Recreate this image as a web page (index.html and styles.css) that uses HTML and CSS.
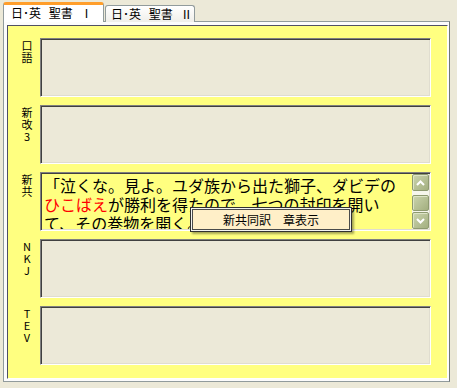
FILE: index.html
```html
<!DOCTYPE html>
<html lang="ja">
<head>
<meta charset="utf-8">
<title>日･英 聖書</title>
<link rel="stylesheet" href="styles.css">
</head>
<body>
<div class="tabs">
  <div class="tab active">日･英 聖書 Ⅰ</div>
  <div class="tab">日･英 聖書 Ⅱ</div>
</div>
<div class="page">
  <div class="panel">
    <div class="label"><span>口</span><span>語</span></div>
    <div class="box"></div>

    <div class="label"><span>新</span><span>改</span><span>3</span></div>
    <div class="box"></div>

    <div class="label"><span>新</span><span>共</span></div>
    <div class="box verse">
      <div class="text">「泣くな。見よ。ユダ族から出た獅子、ダビデの<br><span class="red">ひこばえ</span>が勝利を得たので、七つの封印を開い<br>て、その巻物を開く。」</div>
      <div class="sb">
        <div class="sbtn"><svg width="9" height="6" viewBox="0 0 9 6"><path d="M1 5 L4.5 1.5 L8 5" fill="none" stroke="#fff" stroke-width="2"/></svg></div>
        <div class="track"><div class="thumb"></div></div>
        <div class="sbtn"><svg width="9" height="6" viewBox="0 0 9 6"><path d="M1 1 L4.5 4.5 L8 1" fill="none" stroke="#fff" stroke-width="2"/></svg></div>
      </div>
      <div class="popup">新共同訳　章表示</div>
    </div>

    <div class="label"><span>N</span><span>K</span><span>J</span></div>
    <div class="box"></div>

    <div class="label"><span>T</span><span>E</span><span>V</span></div>
    <div class="box"></div>
  </div>
</div>
</body>
</html>
```
FILE: styles.css
```css
* { box-sizing: border-box; }
body {
  margin: 0;
  width: 457px;
  height: 388px;
  overflow: hidden;
  background: #ECE9D8;
  font-family: "Noto Sans CJK JP", sans-serif;
  font-size: 12px;
  color: #000;
}
.tabs {
  display: flex;
  align-items: flex-end;
  height: 22px;
  padding-left: 3px;
}
.tab {
  height: 17px;
  width: 90px;
  margin-left: 1px;
  border: 1px solid #919B9C;
  border-bottom: none;
  border-radius: 3px 3px 0 0;
  background: linear-gradient(#FFFFFF, #F0EFEA);
  padding-left: 5px;
  line-height: 16px;
  word-spacing: 5px;
  white-space: nowrap;
}
.tab.active {
  position: relative;
  z-index: 1;
  width: 101px;
  height: 20px;
  margin-left: 0;
  background: #FFFFFF;
  border-top: 3px solid #FF9E2B;
  padding-left: 7px;
  line-height: 15px;
}
.page {
  margin: -1px 0 0 3px;
  width: 447px;
  height: 361px;
  border: 1px solid #919B9C;
  border-right-color: #6E7676;
  padding: 3px 1px 2px 3px;
  background: #FCFCFC;
}
.panel {
  width: 441px;
  height: 354px;
  border: 1px solid;
  border-color: #505064 #FFFFFF #FFFFFF #505064;
  background: #FFFF80;
  padding: 12px 16px 13px 0;
  display: grid;
  grid-template-columns: 32px 391px;
  grid-auto-rows: 59px;
  row-gap: 8px;
}
.label {
  padding: 1px 0 0 6px;
  display: flex;
  flex-direction: column;
  align-items: center;
  font-size: 11px;
}
.label span {
  display: block;
  height: 12px;
  line-height: 12px;
}
.box {
  border: 1px solid;
  border-color: #808080 #FFFFFF #FFFFFF #808080;
  box-shadow: inset 1px 1px #404040, inset -1px -1px #E0DDD0;
  background: #ECE9D8;
}
.verse {
  position: relative;
  display: flex;
  background: #FFFF80;
  padding: 1px;
}
.text {
  flex: 1;
  padding: 2px 0 0 2px;
  font-size: 16px;
  line-height: 19px;
  white-space: nowrap;
  overflow: hidden;
}
.red { color: #FF0000; }
.sb {
  width: 17px;
  display: flex;
  flex-direction: column;
  background: #F6F6EC;
}
.sbtn, .thumb {
  height: 17px;
  border: 1px solid #8E9A70;
  border-radius: 2px;
  background: linear-gradient(135deg, #CBD4AE, #A3AF7F);
  box-shadow: inset 1px 1px #DDE4C6;
  display: flex;
  align-items: center;
  justify-content: center;
}
.track {
  flex: 1;
  display: flex;
  flex-direction: column;
  justify-content: flex-end;
  padding: 0 0 1px;
}
.thumb { height: 16px; }
.popup {
  position: absolute;
  left: 149px;
  top: 34px;
  width: 162px;
  height: 25px;
  border: 1px solid #303030;
  box-shadow: inset 0 0 0 1px #F4F4F0, inset 0 0 0 2px #4A4A4A, 2px 2px 2px rgba(0,0,0,0.35);
  background: #FFEFC8;
  font-size: 12px;
  line-height: 23px;
  text-align: center;
}
```
